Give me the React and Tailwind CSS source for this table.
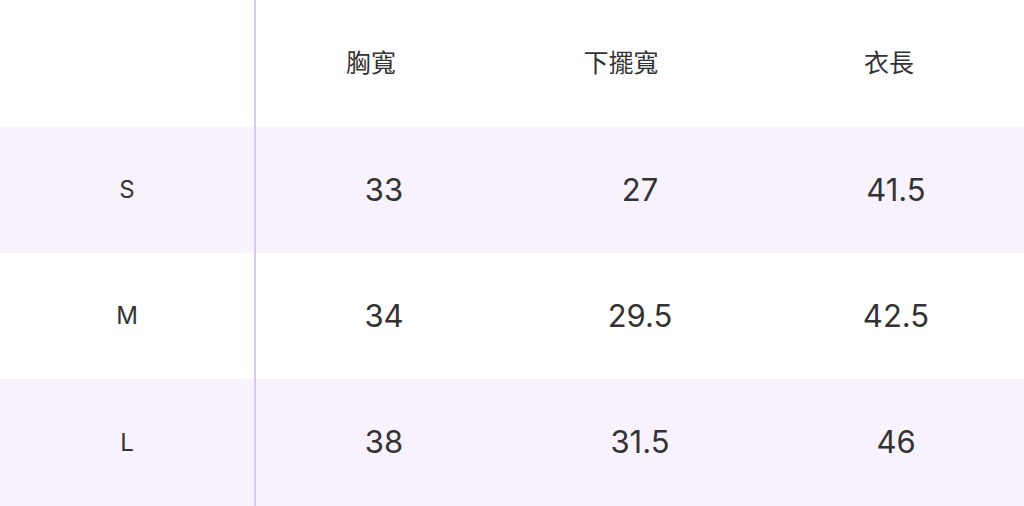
export default function App() {
  const rows = [
    ["S", "33", "27", "41.5"],
    ["M", "34", "29.5", "42.5"],
    ["L", "38", "31.5", "46"],
  ];
  const font = { fontFamily: "Inter, 'Noto Sans CJK TC', sans-serif" };
  return (
    <div className="w-[1024px] h-[506px] overflow-hidden bg-white text-[#333333]" style={font}>
      <div className="grid grid-cols-[254px_2px_1fr_1fr_1fr] grid-rows-[127px_126px_126px_127px]">
        <div className="bg-white" />
        <div className="bg-[#d8cbf3]" />
        <div className="flex items-center justify-center pr-[26px] text-[25px] bg-white">胸寬</div>
        <div className="flex items-center justify-center pr-[38px] text-[25px] bg-white">下擺寬</div>
        <div className="flex items-center justify-center pr-[14px] text-[25px] bg-white">衣長</div>
        {rows.map((r, i) => {
          const bg = i % 2 === 0 ? "bg-[#f8f2fd]" : "bg-white";
          return [
            <div key={i + "a"} className={"flex items-center justify-center text-[24px] " + bg}>{r[0]}</div>,
            <div key={i + "l"} className="bg-[#d8cbf3]" />,
            <div key={i + "b"} className={"flex items-center justify-center text-[31px] " + bg}>{r[1]}</div>,
            <div key={i + "c"} className={"flex items-center justify-center text-[31px] " + bg}>{r[2]}</div>,
            <div key={i + "d"} className={"flex items-center justify-center text-[31px] " + bg}>{r[3]}</div>,
          ];
        })}
      </div>
    </div>
  );
}
